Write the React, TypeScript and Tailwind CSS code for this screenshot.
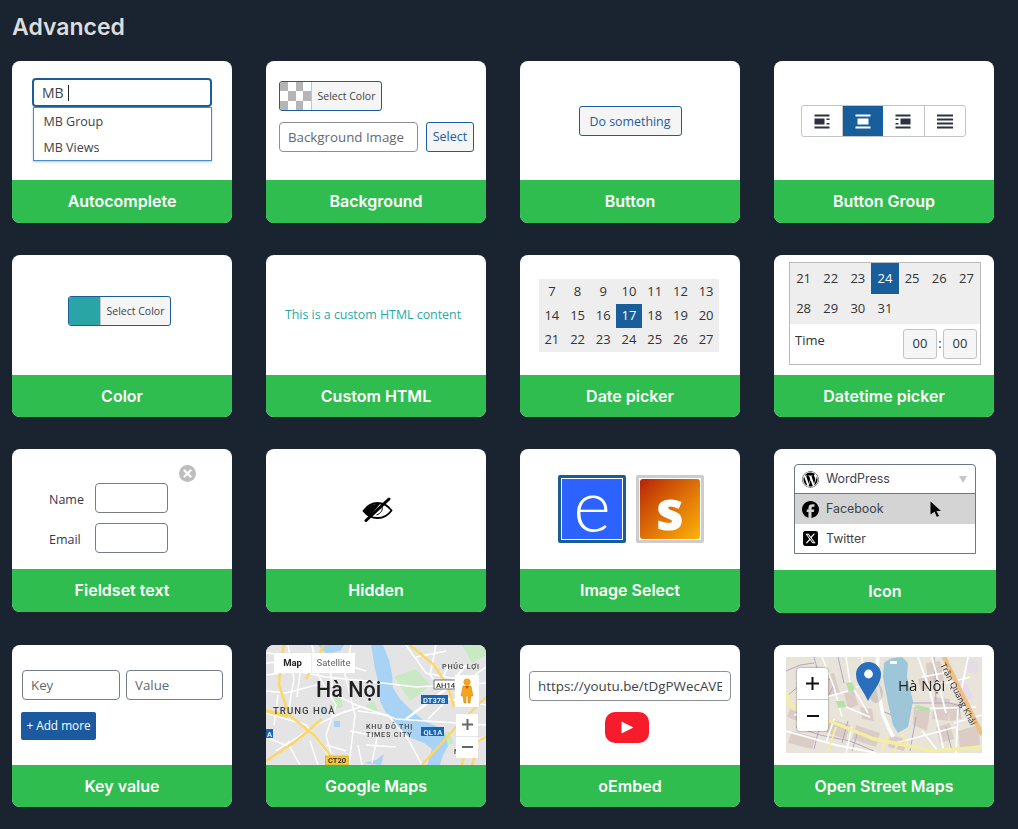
import React from "react";
import { FaFacebook, FaSquareXTwitter, FaWordpress } from "react-icons/fa6";

function Card({
  title,
  preview,
  footer = "h-[42px]",
  width = "w-[220px]",
  children,
}: {
  title: string;
  preview: string;
  footer?: string;
  width?: string;
  children: React.ReactNode;
}) {
  return (
    <div className={`${width} overflow-hidden rounded-lg bg-white`}>
      <div className={preview}>{children}</div>
      <div
        className={`${footer} flex items-center justify-center bg-[#2fbd4f] pb-px font-['Inter',sans-serif] text-base font-semibold text-white`}
      >
        {title}
      </div>
    </div>
  );
}

function SelectColor({ swatch }: { swatch: React.ReactNode }) {
  return (
    <div className="flex h-[30px] w-[103px] overflow-hidden rounded-[3px] border border-[#1a5c9e] bg-[#f5f5f5]">
      {swatch}
      <span className="flex flex-1 items-center justify-center border-l border-[#c3c4c7] pt-px text-[10.5px] text-[#3c434a]">
        Select Color
      </span>
    </div>
  );
}

function Checker() {
  const cells = [];
  for (let r = 0; r < 3; r++) {
    for (let c = 0; c < 4; c++) {
      cells.push(<div key={`${r}${c}`} className={(r + c) % 2 === 0 ? "bg-[#b5b5b5]" : "bg-white"} />);
    }
  }
  return <div className="grid w-[31px] shrink-0 grid-cols-4 grid-rows-3">{cells}</div>;
}

function AlignIcon({ kind, color }: { kind: number; color: string }) {
  return (
    <svg width="16" height="15" viewBox="0 0 16 15" fill={color}>
      {kind < 3 && <rect x="0.5" y="0.5" width="15" height="2" />}
      {kind < 3 && <rect x="0.5" y="12.5" width="15" height="2" />}
      {kind === 0 && (
        <>
          <rect x="0.5" y="4.5" width="10" height="6" />
          <rect x="12.5" y="4.5" width="3" height="1.5" />
          <rect x="12.5" y="9" width="3" height="1.5" />
        </>
      )}
      {kind === 1 && <rect x="2.5" y="4.5" width="11" height="6" />}
      {kind === 2 && (
        <>
          <rect x="0.5" y="4.5" width="3" height="1.5" />
          <rect x="0.5" y="9" width="3" height="1.5" />
          <rect x="5.5" y="4.5" width="10" height="6" />
        </>
      )}
      {kind === 3 && (
        <>
          <rect x="0" y="0.5" width="16" height="2" />
          <rect x="0" y="4.5" width="16" height="2" />
          <rect x="0" y="8.5" width="16" height="2" />
          <rect x="0" y="12.5" width="16" height="2" />
        </>
      )}
    </svg>
  );
}

function GoogleMap() {
  return (
    <svg className="absolute inset-0" width="220" height="120" viewBox="0 0 220 120" fontFamily="Roboto, sans-serif">
      <rect width="220" height="120" fill="#e4e4e4" />
      <path d="M128 32l22-8 14 16-20 16z M66 50l8-2 3 14-9 2z M170 92l12-6 6 12-14 6z M196 0l24 0 0 10-14 8z M100 60l8-4 4 10-8 4z" fill="#c9e8c4" />
      <path d="M52 0h26l-4 6-14 3z M98 118l12-3 8-6-3 11z M55 62l5 0 0 6-5 0z M68 76l6 0 0 6-6 0z" fill="#a9d3f5" />
      <path
        d="M105 0h12l6 15 3 14 1 14 7 11 10 10 14 12 12 5 9 8 3 12-5 9-6 20h-12l4-16 3-10-8-6-15-6-13-12-10-12-6-12-1-16-4-16z"
        fill="#a9d3f5"
      />
      <g fill="none" stroke="#fff" strokeWidth="1.5">
        <path d="M0 30l30-4 30 6 40 4 50 6 70-4" />
        <path d="M0 18l20-2 24 4 30-2 26 8M0 8l24 2 30 4" />
        <path d="M0 46l20 2 30-8 40 20 40 14 90 6" />
        <path d="M0 68l40 12 30 40" />
        <path d="M22 0l6 34-6 34M46 0l6 30 18 30-10 30 8 30M85 0l-6 30 10 40-6 50M64 18l2 24M34 28l-3 24M12 50l-4 30" />
        <path d="M92 66l30 4 20 24 14 26M20 100l30-20 30-14M70 70l24-8M84 86l30 6M92 100l4 20M112 88l-6 30" />
        <path d="M140 0l20 28 40 8 20-14M170 0l-6 30 12 14M222 60l-40-6-20 20M190 100l30-8M150 12l30-6M182 22l-10 20M200 42l4 20" />
        <path d="M0 92l24 10 10 18M100 100l30 2M60 100l20 6M10 106l14-10M44 96l8 24" />
        <path d="M200 20l-20 24-40 30" strokeWidth="2.4" />
      </g>
      <g fill="none" stroke="#fdd663" strokeWidth="2.4">
        <path d="M13 40l10 30 25 20 24 30" />
        <path d="M0 66l22 5" strokeWidth="3.5" />
        <path d="M0 116l30-20 26-22" />
        <path d="M144 0l24 20 14 22 6 20" />
        <path d="M220 52l-30 30-34 38" />
        <path d="M58 0l-10 20-8 14M18 0l-3 14-2 26" />
        <path d="M196 120l4-18 20-10M206 120l4-12" />
      </g>
      <text x="50" y="52" fontSize="21.5" fontWeight="500" fill="#1f1f1f">Hà Nội</text>
      <text x="7" y="69" fontSize="9.6" fontWeight="500" fill="#3f3f3f" letterSpacing="1">TRUNG HOÀ</text>
      <g fontSize="7.2" fontWeight="500" fill="#444" letterSpacing="0.8">
        <text x="100" y="84">KHU ĐÔ THỊ</text>
        <text x="100" y="92">TIMES CITY</text>
        <text x="176" y="24">PHÚC LỢI</text>
        <text x="188" y="109">N</text>
      </g>
      <rect x="168" y="35" width="24" height="9" fill="#fff" stroke="#555" strokeWidth="0.8" />
      <text x="170" y="42.5" fontSize="7.6" fontWeight="500" fill="#333">AH14</text>
      <rect x="155" y="50" width="27" height="9" fill="#1a65b8" />
      <text x="157" y="57.5" fontSize="7.6" fontWeight="500" fill="#fff">DT378</text>
      <rect x="155" y="82" width="23" height="9" fill="#1a65b8" />
      <text x="157.5" y="89.5" fontSize="7.6" fontWeight="500" fill="#fff">QL1A</text>
      <rect x="-6" y="84" width="13" height="9" fill="#1a65b8" />
      <text x="1" y="91.5" fontSize="7.6" fontWeight="500" fill="#fff">A</text>
      <rect x="59.5" y="111" width="23" height="9" fill="#f6c63f" stroke="#c19a20" strokeWidth="0.5" />
      <text x="62" y="118" fontSize="7.6" fontWeight="500" fill="#222">CT20</text>
    </svg>
  );
}

function StreetMap() {
  return (
    <svg className="absolute inset-0" width="196" height="96" viewBox="0 0 196 96" fontFamily="'Open Sans', sans-serif">
      <rect width="196" height="96" fill="#e9e4da" />
      <g fill="#dbcdc6">
        <path d="M6 74l24 6-4 12-24-6zM44 62l20 6-4 14-20-6zM70 68l24 8-4 14-24-8zM128 50l16 4-3 20-14-6zM148 40l16 2-2 22-16-2zM34 20l14-4 6 20-16 4zM140 6l14-2 4 20-16 2zM172 74l20-6 2 20-20 4z" />
        <path d="M58 36l10-2 4 14-10 4zM74 50l12 2 2 12-12-2zM4 52l20 8-3 8-20-8zM132 22l8-2 3 12-8 2zM160 48l12-2 4 16-12 2zM150 70l14-4 4 16-14 4zM104 78l16 4-2 12-16-4z" />
      </g>
      <g fill="#e5dcea">
        <path d="M164 24l12-4 12 20-12 6zM178 4h14v12h-8z" />
      </g>
      <g fill="none" stroke="#b3a5c5" strokeWidth="1">
        <path d="M0 40l16-14 30-4M28 0l6 22 6 30M52 0l6 26M10 70l24 8 30 6 24 10M40 56l-8 20-4 16M96 54l24 10M124 46l40 0 20 6M148 0l2 44M62 64l-6 22M0 14l14-6 14-2M16 26l8 30M48 28l-12 22M72 74l-6 20M130 60l-6 34M160 70l6 24M176 40l-6 30" />
      </g>
      <g fill="none" stroke="#fff" strokeWidth="1.8">
        <path d="M0 74l50 14 40 8" />
        <path d="M36 0l12 30 8 30M60 0l4 26 18 30M76 0l2 30M40 40l22-6M18 40l12 12M8 58l30-8" strokeWidth="1.5" />
        <path d="M132 0l12 34 14 60M146 0l10 40 4 16M172 52l-2 44M182 0l-8 40" />
        <path d="M130 52l60-2M110 86l60-16M136 20l22-4M160 26l24-6M168 66l28-8M136 74l16 20" strokeWidth="1.5" />
        <path d="M92 0l-2 22 7 36 10 22" strokeWidth="3.5" />
        <path d="M60 50l24 10M70 30l16-4M48 62l-8 24M66 70l-6 26" strokeWidth="1.5" />
      </g>
      <path d="M98 6Q104 0 116 0L122 6L121 20L127 44L122 70L112 76L107 68L102 46L97 20Z" fill="#9dc6d8" />
      <path d="M0 34l4 14 40 16 44 18 60 12 48-4" fill="none" stroke="#f3eea4" strokeWidth="3.5" />
      <path d="M50 70l-8 24M102 78l-6 16M112 84l-4 12M116 76l6 20" fill="none" stroke="#f3eea4" strokeWidth="2" />
      <path d="M158 0l38 78" fill="none" stroke="#eec083" strokeWidth="4.5" />
      <path d="M60 26l6-1 3 8-6 2zM130 48l14 3-1 4-14-3zM50 44l8 0 2 6-8 1z" fill="#b6dfa9" />
      <path d="M104 4h7v3h-7z" fill="#fff" />
      <text x="112" y="34" fontSize="15" fill="#222">Hà Nội</text>
      <text x="154" y="8" fontSize="8.8" fill="#333" transform="rotate(63 154 8)">
        Trần Quang Khải
      </text>
      <ellipse cx="90" cy="36" rx="7" ry="10" fill="#000" opacity="0.12" />
      <path
        d="M82 44C78 34 70 27 70 17.5C70 10.5 75.5 5 82.5 5C89.5 5 95 10.5 95 17.5C95 27 86.5 34 82 44Z"
        fill="#2a6fbe"
      />
      <circle cx="82.5" cy="17" r="4.4" fill="#fff" />
    </svg>
  );
}

const dates = [7, 8, 9, 10, 11, 12, 13, 14, 15, 16, 17, 18, 19, 20, 21, 22, 23, 24, 25, 26, 27];
const lastDates = [21, 22, 23, 24, 25, 26, 27, 28, 29, 30, 31];

export default function App() {
  return (
    <div className="min-h-screen bg-[#1a2430] px-3 pt-[11px] font-['Open_Sans',sans-serif]">
      <h2 className="mb-[18px] font-['Inter',sans-serif] text-[23px] leading-8 font-semibold text-[#dcdcdc]">Advanced</h2>

      <div className="grid grid-cols-[repeat(4,220px)] items-start gap-x-[34px] gap-y-8">
        <Card title="Autocomplete" footer="h-[43px]" preview="flex h-[119px] flex-col items-center pt-[17px]">
          <div className="flex h-[29px] w-[180px] items-center rounded-[4px] border-2 border-[#1a5c9e] pl-2 text-sm text-[#3c434a]">
            MB
            <span className="ml-1 h-4 w-px bg-[#222]" />
          </div>
          <div className="flex h-[54px] w-[179px] flex-col justify-center gap-[7px] border border-[#4a8bd0] pl-2.5 text-[12.5px] leading-[19px] text-[#3c434a] shadow-[0_1px_2px_rgba(30,100,200,0.35)]">
            <span>MB Group</span>
            <span>MB Views</span>
          </div>
        </Card>

        <Card title="Background" footer="h-[43px]" preview="flex h-[119px] flex-col gap-[11px] pl-[13px] pt-5">
          <SelectColor swatch={<Checker />} />
          <div className="flex gap-2">
            <div className="flex h-[30px] w-[139px] items-center rounded-[4px] border border-[#8c8f94] pl-2 pt-px text-[13.3px] text-[#646970]">
              Background Image
            </div>
            <div className="flex h-[30px] w-12 items-center justify-center rounded-[3px] border border-[#1a5c9e] bg-[#f5f5f5] pt-px text-[12.5px] text-[#1a5c9e]">
              Select
            </div>
          </div>
        </Card>

        <Card title="Button" footer="h-[43px]" preview="flex h-[119px] items-center justify-center pt-px">
          <div className="flex h-[30px] w-[103px] items-center justify-center rounded-[3px] border border-[#1a5c9e] bg-[#f5f5f5] pt-[2px] text-[12.4px] text-[#1a5c9e]">
            Do something
          </div>
        </Card>

        <Card title="Button Group" footer="h-[43px]" preview="flex h-[119px] items-center justify-center pr-[2px] pt-px">
          <div className="flex h-8 w-[165px] overflow-hidden rounded-[3px] border border-[#c3c4c7]">
            <div className="flex w-[41px] items-center justify-center border-r border-[#c3c4c7]">
              <AlignIcon kind={0} color="#2c3040" />
            </div>
            <div className="flex w-10 items-center justify-center bg-[#185e9b]">
              <AlignIcon kind={1} color="#ffffff" />
            </div>
            <div className="flex w-[42px] items-center justify-center border-r border-[#c3c4c7]">
              <AlignIcon kind={2} color="#2c3040" />
            </div>
            <div className="flex flex-1 items-center justify-center">
              <AlignIcon kind={3} color="#2c3040" />
            </div>
          </div>
        </Card>

        <Card title="Color" preview="flex h-[120px] items-start pl-14 pt-[41px]">
          <SelectColor swatch={<div className="w-[31px] shrink-0 bg-[#2aa5a7]" />} />
        </Card>

        <Card title="Custom HTML" preview="flex h-[120px] items-center justify-center pr-[6px] text-[12.4px] text-[#1fa9a9]">
          <span>This is a custom HTML content</span>
        </Card>

        <Card title="Date picker" preview="flex h-[120px] justify-center pr-[2px] pt-6">
          <div className="grid h-[73px] w-[180px] grid-cols-7 grid-rows-[25px_24px_24px] bg-[#eeeeee] text-[13px] text-[#333]">
            {dates.map((d) => (
              <span
                key={d}
                className={d === 17 ? "flex items-center justify-center bg-[#185e9b] text-white" : "flex items-center justify-center"}
              >
                {d}
              </span>
            ))}
          </div>
        </Card>

        <Card title="Datetime picker" preview="flex h-[120px] justify-center pl-[2px] pt-[7px]">
          <div className="h-[103px] w-[192px] border border-[#bbbbbb]">
            <div className="grid h-[61px] grid-cols-7 grid-rows-2 bg-[#eeeeee] text-[13px] text-[#333]">
              {lastDates.map((d) => (
                <span
                  key={d}
                  className={d === 24 ? "flex items-center justify-center bg-[#185e9b] text-white" : "flex items-center justify-center"}
                >
                  {d}
                </span>
              ))}
            </div>
            <div className="flex items-start pl-[5px] pr-[3px] pt-[5px] text-[13px] text-[#333]">
              <span className="flex-1 pt-[2px]">Time</span>
              <div className="flex items-center">
                <span className="flex h-[30px] w-[34px] items-center justify-center rounded-[3px] border border-[#c3c4c7] bg-[#f5f5f5]">
                  00
                </span>
                <span className="w-[6px] text-center">:</span>
                <span className="flex h-[30px] w-[34px] items-center justify-center rounded-[3px] border border-[#c3c4c7] bg-[#f5f5f5]">
                  00
                </span>
              </div>
            </div>
          </div>
        </Card>

        <Card title="Fieldset text" footer="h-[43px]" preview="relative flex h-[120px] flex-col gap-[10px] pl-[37px] pt-[34px] text-[12.5px] text-[#3c3452]">
          <svg className="absolute right-9 top-4" width="17" height="17" viewBox="0 0 17 17">
            <circle cx="8.5" cy="8.5" r="8.5" fill="#bdbdbd" />
            <path d="M5.5 5.5l6 6M11.5 5.5l-6 6" stroke="#fff" strokeWidth="2.4" strokeLinecap="round" />
          </svg>
          <div className="flex items-center gap-[13px]">
            <span className="w-[33px] pt-1">Name</span>
            <input className="h-[30px] w-[73px] rounded-[4px] border border-[#767b85] bg-white" readOnly />
          </div>
          <div className="flex items-center gap-[13px]">
            <span className="w-[33px] pt-1">Email</span>
            <input className="h-[30px] w-[73px] rounded-[4px] border border-[#767b85] bg-white" readOnly />
          </div>
        </Card>

        <Card title="Hidden" footer="h-[43px]" preview="flex h-[120px] items-center justify-center pl-[2px]">
          <svg width="32" height="26" viewBox="0 0 32 26" fill="none">
            <path d="M2.5 15C6.5 9.5 11 7 16.5 7C22 7 27 9.5 30.5 14.5C27 19.5 22 22 16.5 22C10.5 22 6 19.5 2.5 15Z" stroke="#000" strokeWidth="1.8" />
            <path d="M3 15C7 10 11 7.5 19 8L9 20C6.5 18.5 4.5 17 3 15Z" fill="#000" />
            <path d="M21 10.5C22 14 20 17.5 15.5 19" stroke="#000" strokeWidth="1" />
            <path d="M5 24.5L28 3" stroke="#000" strokeWidth="3" strokeLinecap="round" />
          </svg>
        </Card>

        <Card title="Image Select" footer="h-[43px]" preview="flex h-[120px] items-start justify-center gap-[10px] pl-[2px] pt-[26px]">
          <div className="flex size-[68px] items-center justify-center rounded-[2px] border-[3px] border-[#185e94] bg-[#2c62ff] outline outline-1 -outline-offset-[4px] outline-white">
            <span className="h-[62px] font-['Lato',sans-serif] text-[72px] leading-[52px] font-light text-white">e</span>
          </div>
          <div className="flex size-[68px] items-center justify-center rounded-[2px] border-[3px] border-[#cccccc] p-[1px]">
            <div className="flex size-full items-center justify-center rounded-[3px] bg-linear-to-br from-[#b81c06] to-[#fdb206]">
              <span className="font-['Open_Sans',sans-serif] text-[54px] leading-[50px] font-extrabold text-white">s</span>
            </div>
          </div>
        </Card>

        <Card title="Icon" width="w-[222px]" footer="h-[43px]" preview="flex h-[121px] justify-center pt-[15px]">
          <div className="h-[90px] w-[182px] rounded-t-[4px] border border-[#6f7683] font-['Inter',sans-serif] text-[12.4px] text-[#3c434a]">
            <div className="flex h-[29px] items-center gap-[7px] border-b border-[#6f7683] pl-[7px]">
              <FaWordpress className="size-[17px] text-black" />
              <span className="flex-1 pt-px">WordPress</span>
              <span className="mr-2 h-0 w-0 border-x-[4px] border-t-[7px] border-x-transparent border-t-[#c4c4c4]" />
            </div>
            <div className="relative flex h-[30px] items-center gap-[7px] bg-[#d4d4d4] pl-[7px]">
              <FaFacebook className="size-[17px] text-black" />
              <span>Facebook</span>
              <svg className="absolute left-[135px] top-[7px]" width="12" height="16" viewBox="0 0 12 16" fill="#000">
                <path d="M0.5 0.5L11 10H6.5L9 15L6.8 15.7L4.5 10.8L0.5 13.5Z" />
              </svg>
            </div>
            <div className="flex h-[29px] items-center gap-[7px] pl-[7px]">
              <FaSquareXTwitter className="size-[17px] text-black" />
              <span className="pt-px">Twitter</span>
            </div>
          </div>
        </Card>

        <Card title="Key value" preview="flex h-[120px] flex-col gap-3 pl-[9px] pt-[25px]">
          <div className="flex gap-[6px] pl-px">
            <div className="flex h-[30px] w-[98px] items-center rounded-[4px] border border-[#767b85] pl-2 pt-px text-[13.3px] text-[#646970]">
              Key
            </div>
            <div className="flex h-[30px] w-[97px] items-center rounded-[4px] border border-[#767b85] pl-2 pt-px text-[13.3px] text-[#646970]">
              Value
            </div>
          </div>
          <div className="flex h-7 w-[75px] items-center justify-center rounded-[2px] bg-[#1b5a9e] text-[11.8px] font-medium text-white">
            + Add more
          </div>
        </Card>

        <Card title="Google Maps" preview="relative h-[120px] blur-[0.3px]">
          <GoogleMap />
          <div className="absolute left-2 top-2 flex h-5 w-[81px] bg-white font-['Roboto',sans-serif] text-[9.5px]">
            <span className="flex w-[37px] items-center justify-center font-bold text-[#222]">Map</span>
            <span className="flex flex-1 items-center justify-center border-l border-[#eeeeee] text-[#666]">Satellite</span>
          </div>
          <div className="absolute left-[189px] top-[30px] flex h-8 w-6 items-center justify-center bg-white">
            <svg width="14" height="26" viewBox="0 0 14 26">
              <circle cx="7" cy="4" r="3.5" fill="#f2a51a" />
              <path d="M3 8h8l2 10h-2l-1 7h-2v-7h-2v7H4l-1-7H1z" fill="#f2a51a" stroke="#c57f10" strokeWidth="0.5" />
              <path d="M5 8l2 3 2-3z" fill="#d14a2a" />
            </svg>
          </div>
          <div className="absolute left-[190px] top-[69px] flex h-11 w-[22px] flex-col bg-white">
            <span className="flex flex-1 items-center justify-center border-b border-[#e6e6e6]">
              <svg width="11" height="11" viewBox="0 0 11 11" fill="#666"><path d="M4.5 0h2v4.5H11v2H6.5V11h-2V6.5H0v-2h4.5z" /></svg>
            </span>
            <span className="flex flex-1 items-center justify-center">
              <svg width="11" height="3" viewBox="0 0 11 3" fill="#666"><rect width="11" height="2" /></svg>
            </span>
          </div>
        </Card>

        <Card title="oEmbed" preview="flex h-[120px] flex-col items-center gap-[11px] pt-[26px]">
          <div className="flex h-[30px] w-[202px] items-center overflow-hidden rounded-[4px] border border-[#8c8f94] px-2 text-[13.4px] whitespace-nowrap text-[#3c434a]">
            <span className="overflow-hidden">https://youtu.be/tDgPWecAVE</span>
          </div>
          <div className="mr-[6px] flex h-[31px] w-11 items-center justify-center rounded-[10px] bg-[#f61c2b]">
            <svg width="13" height="13" viewBox="0 0 13 13" fill="#fff"><path d="M0.5 0.5L12.5 6.5L0.5 12.5Z" /></svg>
          </div>
        </Card>

        <Card title="Open Street Maps" preview="flex h-[120px] pl-3 pt-3">
          <div className="relative h-[96px] w-[196px] overflow-hidden blur-[0.2px]">
            <StreetMap />
            <div className="absolute left-[11px] top-[11px] flex h-[63px] w-[31px] flex-col rounded-[3px] bg-white shadow-[0_0_2px_rgba(0,0,0,0.6)]">
              <span className="flex flex-1 items-center justify-center border-b border-[#cccccc]">
                <svg width="13" height="13" viewBox="0 0 13 13" fill="#111"><path d="M5.5 0h2v5.5H13v2H7.5V13h-2V7.5H0v-2h5.5z" /></svg>
              </span>
              <span className="flex flex-1 items-center justify-center">
                <svg width="12" height="2" viewBox="0 0 12 2" fill="#111"><rect width="12" height="2" /></svg>
              </span>
            </div>
          </div>
        </Card>
      </div>
    </div>
  );
}
